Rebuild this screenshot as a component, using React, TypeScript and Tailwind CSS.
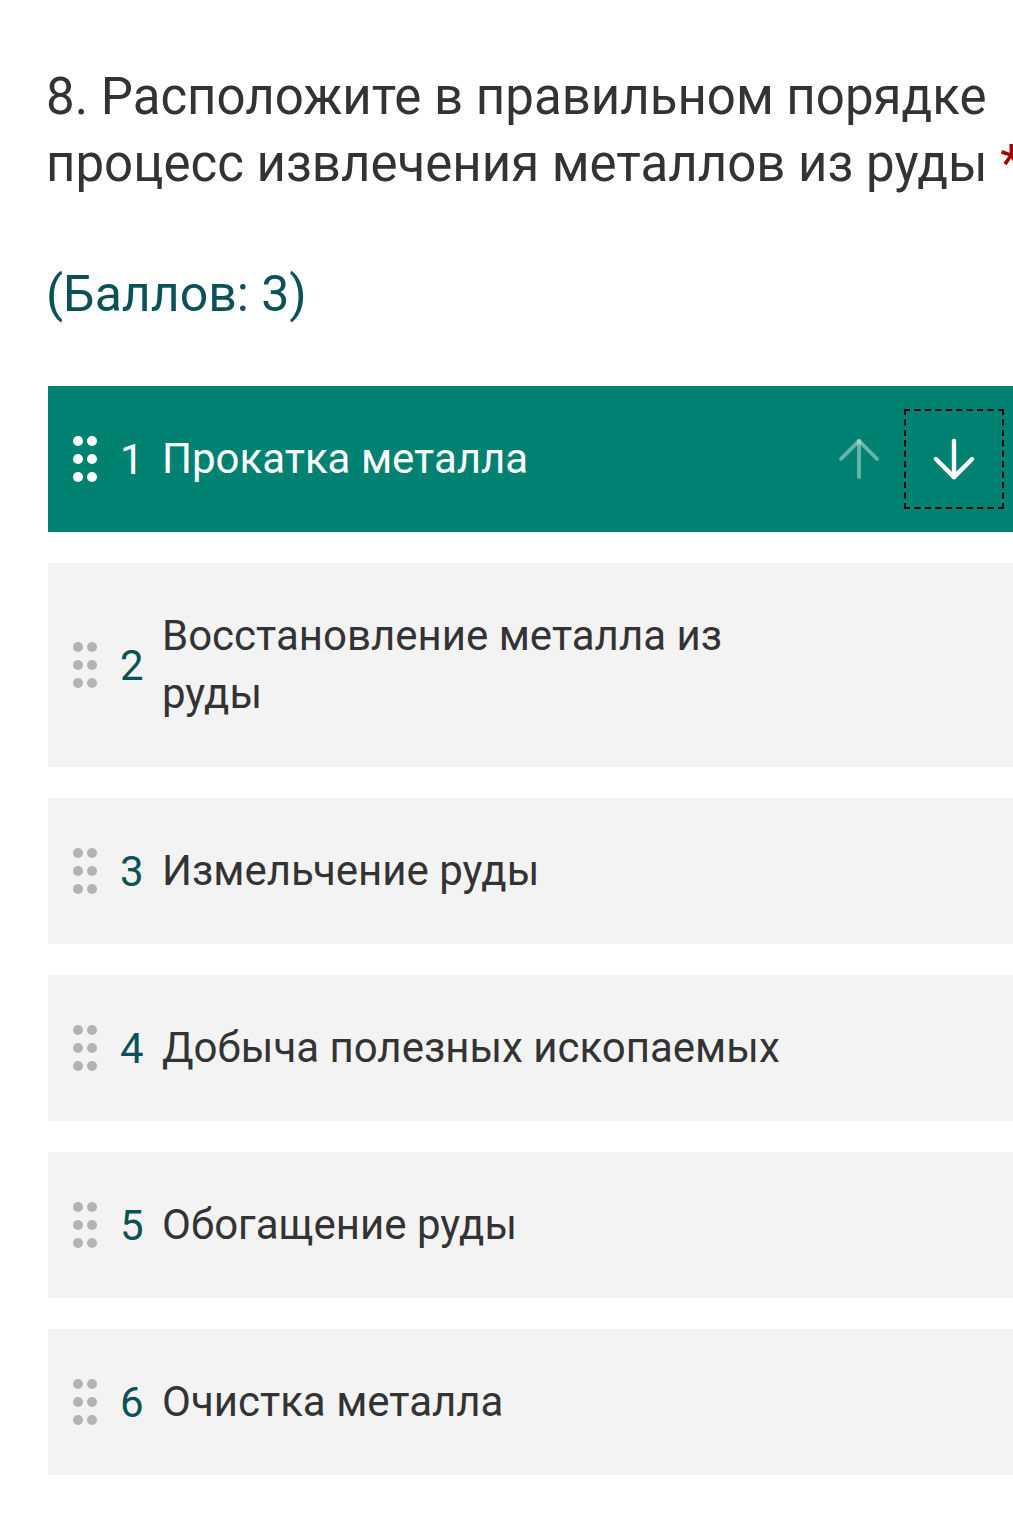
import { ArrowUp, ArrowDown } from 'lucide-react';

const items = [
  'Прокатка металла',
  'Восстановление металла из руды',
  'Измельчение руды',
  'Добыча полезных ископаемых',
  'Обогащение руды',
  'Очистка металла',
];

function Grip({ active }: { active: boolean }) {
  const dot = active ? 'bg-white' : 'bg-[#b3b3b3]';
  return (
    <div className="grid grid-cols-2 gap-x-[4px] gap-y-[8px] shrink-0">
      {Array.from({ length: 6 }).map((_, i) => (
        <span key={i} className={`block w-[10px] h-[10px] rounded-full ${dot}`} />
      ))}
    </div>
  );
}

function Item({ n, label, active }: { n: number; label: string; active: boolean }) {
  return (
    <div
      className={`flex items-center pl-[25px] min-h-[146px] ${
        active ? 'bg-[#008272] text-white' : 'bg-[#f3f3f3] text-[#333333]'
      }`}
    >
      <Grip active={active} />
      <span className={`ml-[23px] w-[42px] shrink-0 text-[42px] ${active ? 'text-white' : 'text-[#0b5158]'}`}>{n}</span>
      <span className="text-[42px] leading-[58px] max-w-[620px] py-[44px]">{label}</span>
      {active && (
        <div className="ml-auto flex items-center gap-[14px] pr-[9px]">
          <ArrowUp size={62} strokeWidth={1.5} className="text-white/40" />
          <div className="w-[100px] h-[100px] border-2 border-dashed border-black flex items-center justify-center">
            <ArrowDown size={62} strokeWidth={1.7} className="text-white" />
          </div>
        </div>
      )}
    </div>
  );
}

export default function App() {
  return (
    <div className="min-h-screen bg-white overflow-hidden" style={{ fontFamily: 'Roboto, "Noto Sans", sans-serif' }}>
      <div className="pt-[63px] pl-[46px]">
        <h1 className="text-[51px] leading-[67px] text-[#333333] whitespace-nowrap">
          8. Расположите в правильном порядке
          <br />
          процесс извлечения металлов из руды <span className="text-[#a80000]">*</span>
        </h1>
        <div className="mt-[67px] text-[50px] leading-[60px] text-[#0b5158]">(Баллов: 3)</div>
      </div>
      <div className="mt-[62px] ml-[48px] flex flex-col gap-[31px]">
        {items.map((label, i) => (
          <Item key={i} n={i + 1} label={label} active={i === 0} />
        ))}
      </div>
    </div>
  );
}
